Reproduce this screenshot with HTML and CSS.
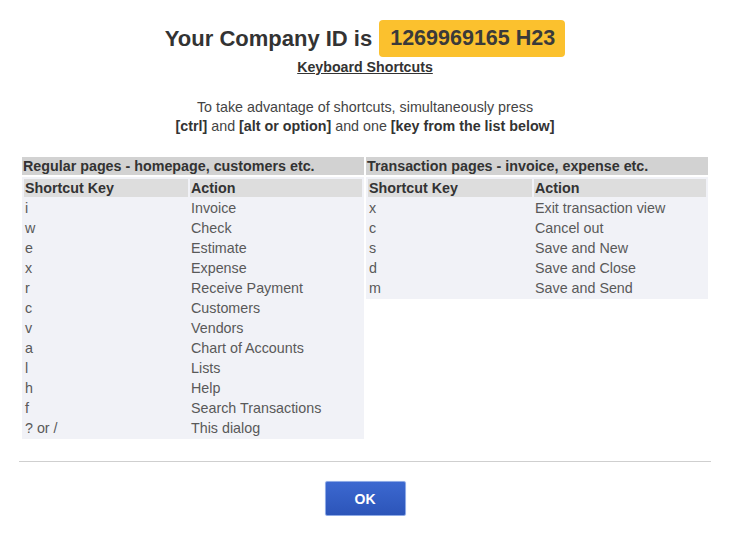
FILE: index.html
```html
<!DOCTYPE html>
<html>

<head>
    <title>Keyboard Shortcuts</title>
    <meta name="viewport" content="width=device-width, minimum-scale=1.0" />
    <link rel="stylesheet" href="styles.css">
</head>

<body>
    <div class="dialog">
        <h1 class="company">
            <span>Your Company ID is</span>
            <span class="company-id">1269969165 H23</span>
        </h1>
        <div class="subtitle">Keyboard Shortcuts</div>
        <p class="hint">
            To take advantage of shortcuts, simultaneously press<br />
            <b>[ctrl]</b> and <b>[alt or option]</b> and one <b>[key from the list below]</b>
        </p>

        <div class="sections">
            <div class="section">
                <div class="section-title">Regular pages - homepage, customers etc.</div>
                <table class="keys">
                    <tr><th class="col-key">Shortcut Key</th><th>Action</th></tr>
                    <tr><td>i</td><td>Invoice</td></tr>
                    <tr><td>w</td><td>Check</td></tr>
                    <tr><td>e</td><td>Estimate</td></tr>
                    <tr><td>x</td><td>Expense</td></tr>
                    <tr><td>r</td><td>Receive Payment</td></tr>
                    <tr><td>c</td><td>Customers</td></tr>
                    <tr><td>v</td><td>Vendors</td></tr>
                    <tr><td>a</td><td>Chart of Accounts</td></tr>
                    <tr><td>l</td><td>Lists</td></tr>
                    <tr><td>h</td><td>Help</td></tr>
                    <tr><td>f</td><td>Search Transactions</td></tr>
                    <tr><td>? or /</td><td>This dialog</td></tr>
                </table>
            </div>
            <div class="section">
                <div class="section-title">Transaction pages - invoice, expense etc.</div>
                <table class="keys">
                    <tr><th class="col-key">Shortcut Key</th><th>Action</th></tr>
                    <tr><td>x</td><td>Exit transaction view</td></tr>
                    <tr><td>c</td><td>Cancel out</td></tr>
                    <tr><td>s</td><td>Save and New</td></tr>
                    <tr><td>d</td><td>Save and Close</td></tr>
                    <tr><td>m</td><td>Save and Send</td></tr>
                </table>
            </div>
        </div>

        <hr class="divider" />
        <div class="ta-c">
            <button class="ok-btn">OK</button>
        </div>
    </div>
</body>

</html>
```

FILE: styles.css
```css
body {
    margin: 0;
    background: #fff;
    font-family: "Liberation Sans", Arial, sans-serif;
    color: #444;
}

.dialog {
    width: 730px;
}

.company {
    display: flex;
    flex-flow: row nowrap;
    justify-content: center;
    align-items: center;
    margin: 20px 0 0;
    height: 37px;
    font-size: 22px;
    color: #333;
}

.company-id {
    margin-left: 7px;
    padding: 0 10px 0 11px;
    height: 37px;
    line-height: 37px;
    font-size: 21.5px;
    background: #fbc12e;
    border-radius: 4px;
    color: #3a3a3a;
}

.subtitle {
    margin-top: 2px;
    line-height: 16px;
    font-size: 14.2px;
    font-weight: bold;
    text-align: center;
    text-decoration: underline;
    color: #333;
}

.hint {
    margin: 23px 0 0;
    line-height: 19px;
    font-size: 14.3px;
    text-align: center;
    color: #444;
}

.hint b {
    color: #333;
}

.sections {
    display: flex;
    flex-flow: row nowrap;
    align-items: flex-start;
    gap: 2px;
    margin: 21px 0 0 22px;
}

.section {
    width: 342px;
}

.section-title {
    height: 18px;
    line-height: 19px;
    padding-left: 1px;
    margin-bottom: 2px;
    font-size: 14.3px;
    font-weight: bold;
    background: #d2d2d2;
    color: #333;
    overflow: hidden;
}

.keys {
    width: 100%;
    border-collapse: separate;
    border-spacing: 2px;
    background: #f1f2f7;
    font-size: 14.3px;
    table-layout: fixed;
}

.keys th,
.keys td {
    height: 17px;
    padding: 1px 0 0 1px;
    line-height: 17px;
    text-align: left;
    overflow: hidden;
    white-space: nowrap;
}

.keys th {
    background: #dddddd;
    color: #333;
}

.keys td {
    color: #595959;
}

.keys .col-key {
    width: 163px;
}

.divider {
    margin: 22px 19px 0;
    border: 0;
    border-top: 1px solid #cfcfcf;
    height: 0;
}

.ta-c {
    text-align: center;
}

.ok-btn {
    margin-top: 19px;
    width: 81px;
    height: 35px;
    font-family: "Liberation Sans", Arial, sans-serif;
    font-size: 14px;
    font-weight: bold;
    color: #fff;
    background: linear-gradient(#3c68d0, #2c55b9);
    border: 1px solid #8eaae6;
    border-radius: 2px;
    box-shadow: 0 0 1px #b9caf0;
}
```
